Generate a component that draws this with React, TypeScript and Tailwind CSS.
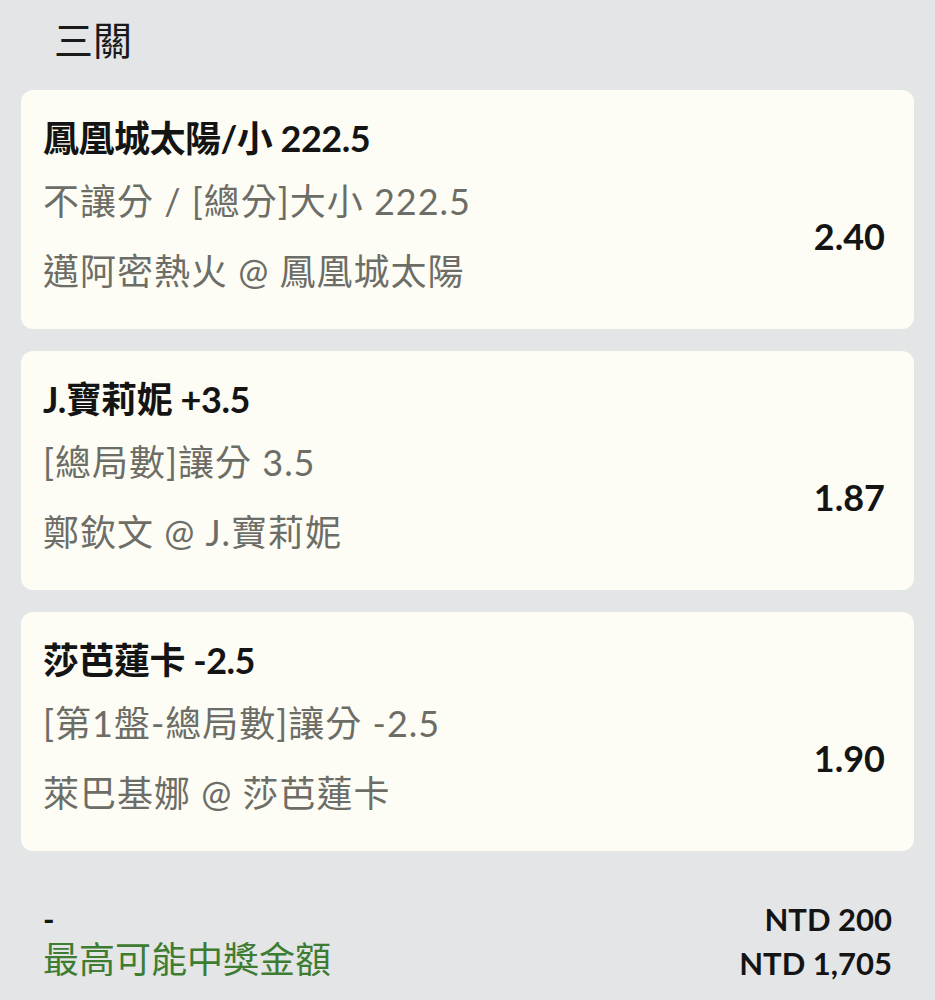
type Leg = {
  title: string;
  market: string;
  match: string;
  odds: string;
};

const legs: Leg[] = [
  {
    title: "鳳凰城太陽/小 222.5",
    market: "不讓分 / [總分]大小 222.5",
    match: "邁阿密熱火 @ 鳳凰城太陽",
    odds: "2.40",
  },
  {
    title: "J.寶莉妮 +3.5",
    market: "[總局數]讓分 3.5",
    match: "鄭欽文 @ J.寶莉妮",
    odds: "1.87",
  },
  {
    title: "莎芭蓮卡 -2.5",
    market: "[第1盤-總局數]讓分 -2.5",
    match: "萊巴基娜 @ 莎芭蓮卡",
    odds: "1.90",
  },
];

function LegCard({ leg }: { leg: Leg }) {
  return (
    <div className="bg-[#fdfdf5] rounded-[12px] pl-[22px] pr-[29px] pt-[26px] pb-[23px]">
      {/* Selection */}
      <div className="text-[36px] leading-[44px] font-bold text-[#141414] tracking-[-0.5px]">
        {leg.title}
      </div>

      <div className="mt-[6px] flex items-center justify-between">
        <div className="text-[36px] leading-[70px] text-[#6d6d67] tracking-[1px]">
          <div>{leg.market}</div>
          <div>{leg.match}</div>
        </div>
        <div className="text-[36px] font-bold text-[#141414]">{leg.odds}</div>
      </div>
    </div>
  );
}

export default function App() {
  return (
    <div
      className="min-h-screen bg-[#e4e5e7]"
      style={{ fontFamily: "Lato, 'Noto Sans CJK TC', sans-serif" }}
    >
      {/* Header */}
      <div className="pl-[54px] h-[90px] text-[39px] leading-[80px] text-[#1a1a1a]">
        三關
      </div>

      {/* Legs */}
      <div className="px-[21px] flex flex-col gap-[22px]">
        {legs.map((leg) => (
          <LegCard key={leg.title} leg={leg} />
        ))}
      </div>

      {/* Summary */}
      <div className="pl-[43px] pr-[43px] pt-[46px] flex justify-between">
        <div>
          <div className="text-[31px] leading-[44px] font-bold text-[#141414]">
            -
          </div>
          <div className="text-[36px] leading-[36px] text-[#3e7c31]">
            最高可能中獎金額
          </div>
        </div>
        <div className="text-right text-[31px] leading-[44px] font-bold text-[#141414]">
          <div>NTD 200</div>
          <div>NTD 1,705</div>
        </div>
      </div>
    </div>
  );
}
